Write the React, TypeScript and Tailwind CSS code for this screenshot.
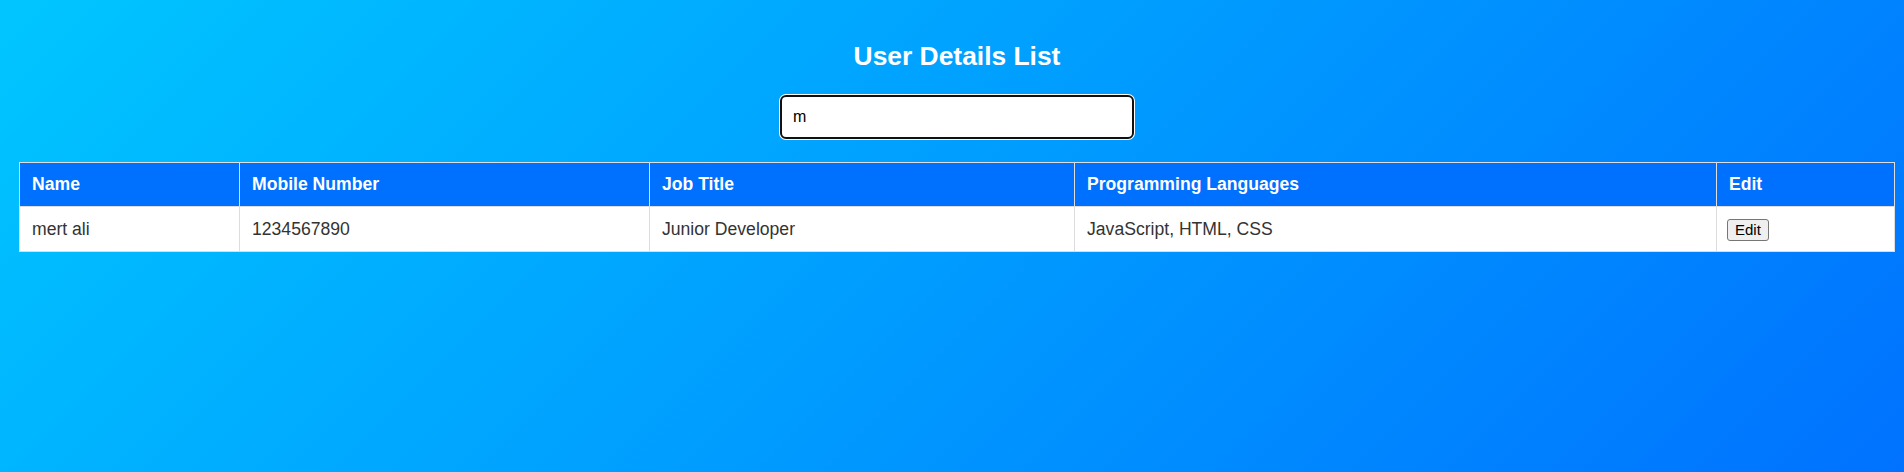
import { useState } from 'react';

type User = {
  name: string;
  mobile: string;
  jobTitle: string;
  languages: string[];
};

const users: User[] = [
  {
    name: 'mert ali',
    mobile: '1234567890',
    jobTitle: 'Junior Developer',
    languages: ['JavaScript', 'HTML', 'CSS'],
  },
];

export default function App() {
  const [query, setQuery] = useState('m');

  const filtered = users.filter((u) => u.name.toLowerCase().includes(query.toLowerCase()));

  return (
    <div className="min-h-screen bg-[linear-gradient(135deg,#00c6ff,#0072ff)] font-['Liberation_Sans',Arial,sans-serif] text-[17.6px] pt-[38px] pl-[19px] pr-[9px]">
      {/* Header */}
      <h2 className="text-center text-white font-bold text-[26.4px] leading-[36px]">User Details List</h2>

      <div className="flex justify-center mt-[21px]">
        <input
          autoFocus
          value={query}
          onChange={(e) => setQuery(e.target.value)}
          className="w-[354px] h-[44px] px-[11px] text-[16px] text-black bg-white border-2 border-[#101010] rounded-[6px] outline-none shadow-[0_0_0_1px_#ffffff]"
        />
      </div>

      {/* Table */}
      <table className="w-full mt-[23px] border-collapse text-left">
        <thead>
          <tr className="bg-[#0070ff] text-white">
            <th className="w-[220px] border border-[#dddddd] px-[12px] h-[44px] font-bold">Name</th>
            <th className="w-[410px] border border-[#dddddd] px-[12px] font-bold">Mobile Number</th>
            <th className="w-[425px] border border-[#dddddd] px-[12px] font-bold">Job Title</th>
            <th className="w-[642px] border border-[#dddddd] px-[12px] font-bold">Programming Languages</th>
            <th className="border border-[#dddddd] px-[12px] font-bold">Edit</th>
          </tr>
        </thead>
        <tbody>
          {filtered.map((u) => (
            <tr key={u.name} className="bg-white text-[#333333]">
              <td className="border border-[#dddddd] px-[12px] h-[45px]">{u.name}</td>
              <td className="border border-[#dddddd] px-[12px]">{u.mobile}</td>
              <td className="border border-[#dddddd] px-[12px]">{u.jobTitle}</td>
              <td className="border border-[#dddddd] px-[12px]">{u.languages.join(', ')}</td>
              <td className="border border-[#dddddd] px-[10px]">
                <button className="text-[15px] leading-[18px] text-black bg-[#efefef] border border-[#767676] rounded-[3px] px-[7px] py-[1px]">
                  Edit
                </button>
              </td>
            </tr>
          ))}
        </tbody>
      </table>
    </div>
  );
}
